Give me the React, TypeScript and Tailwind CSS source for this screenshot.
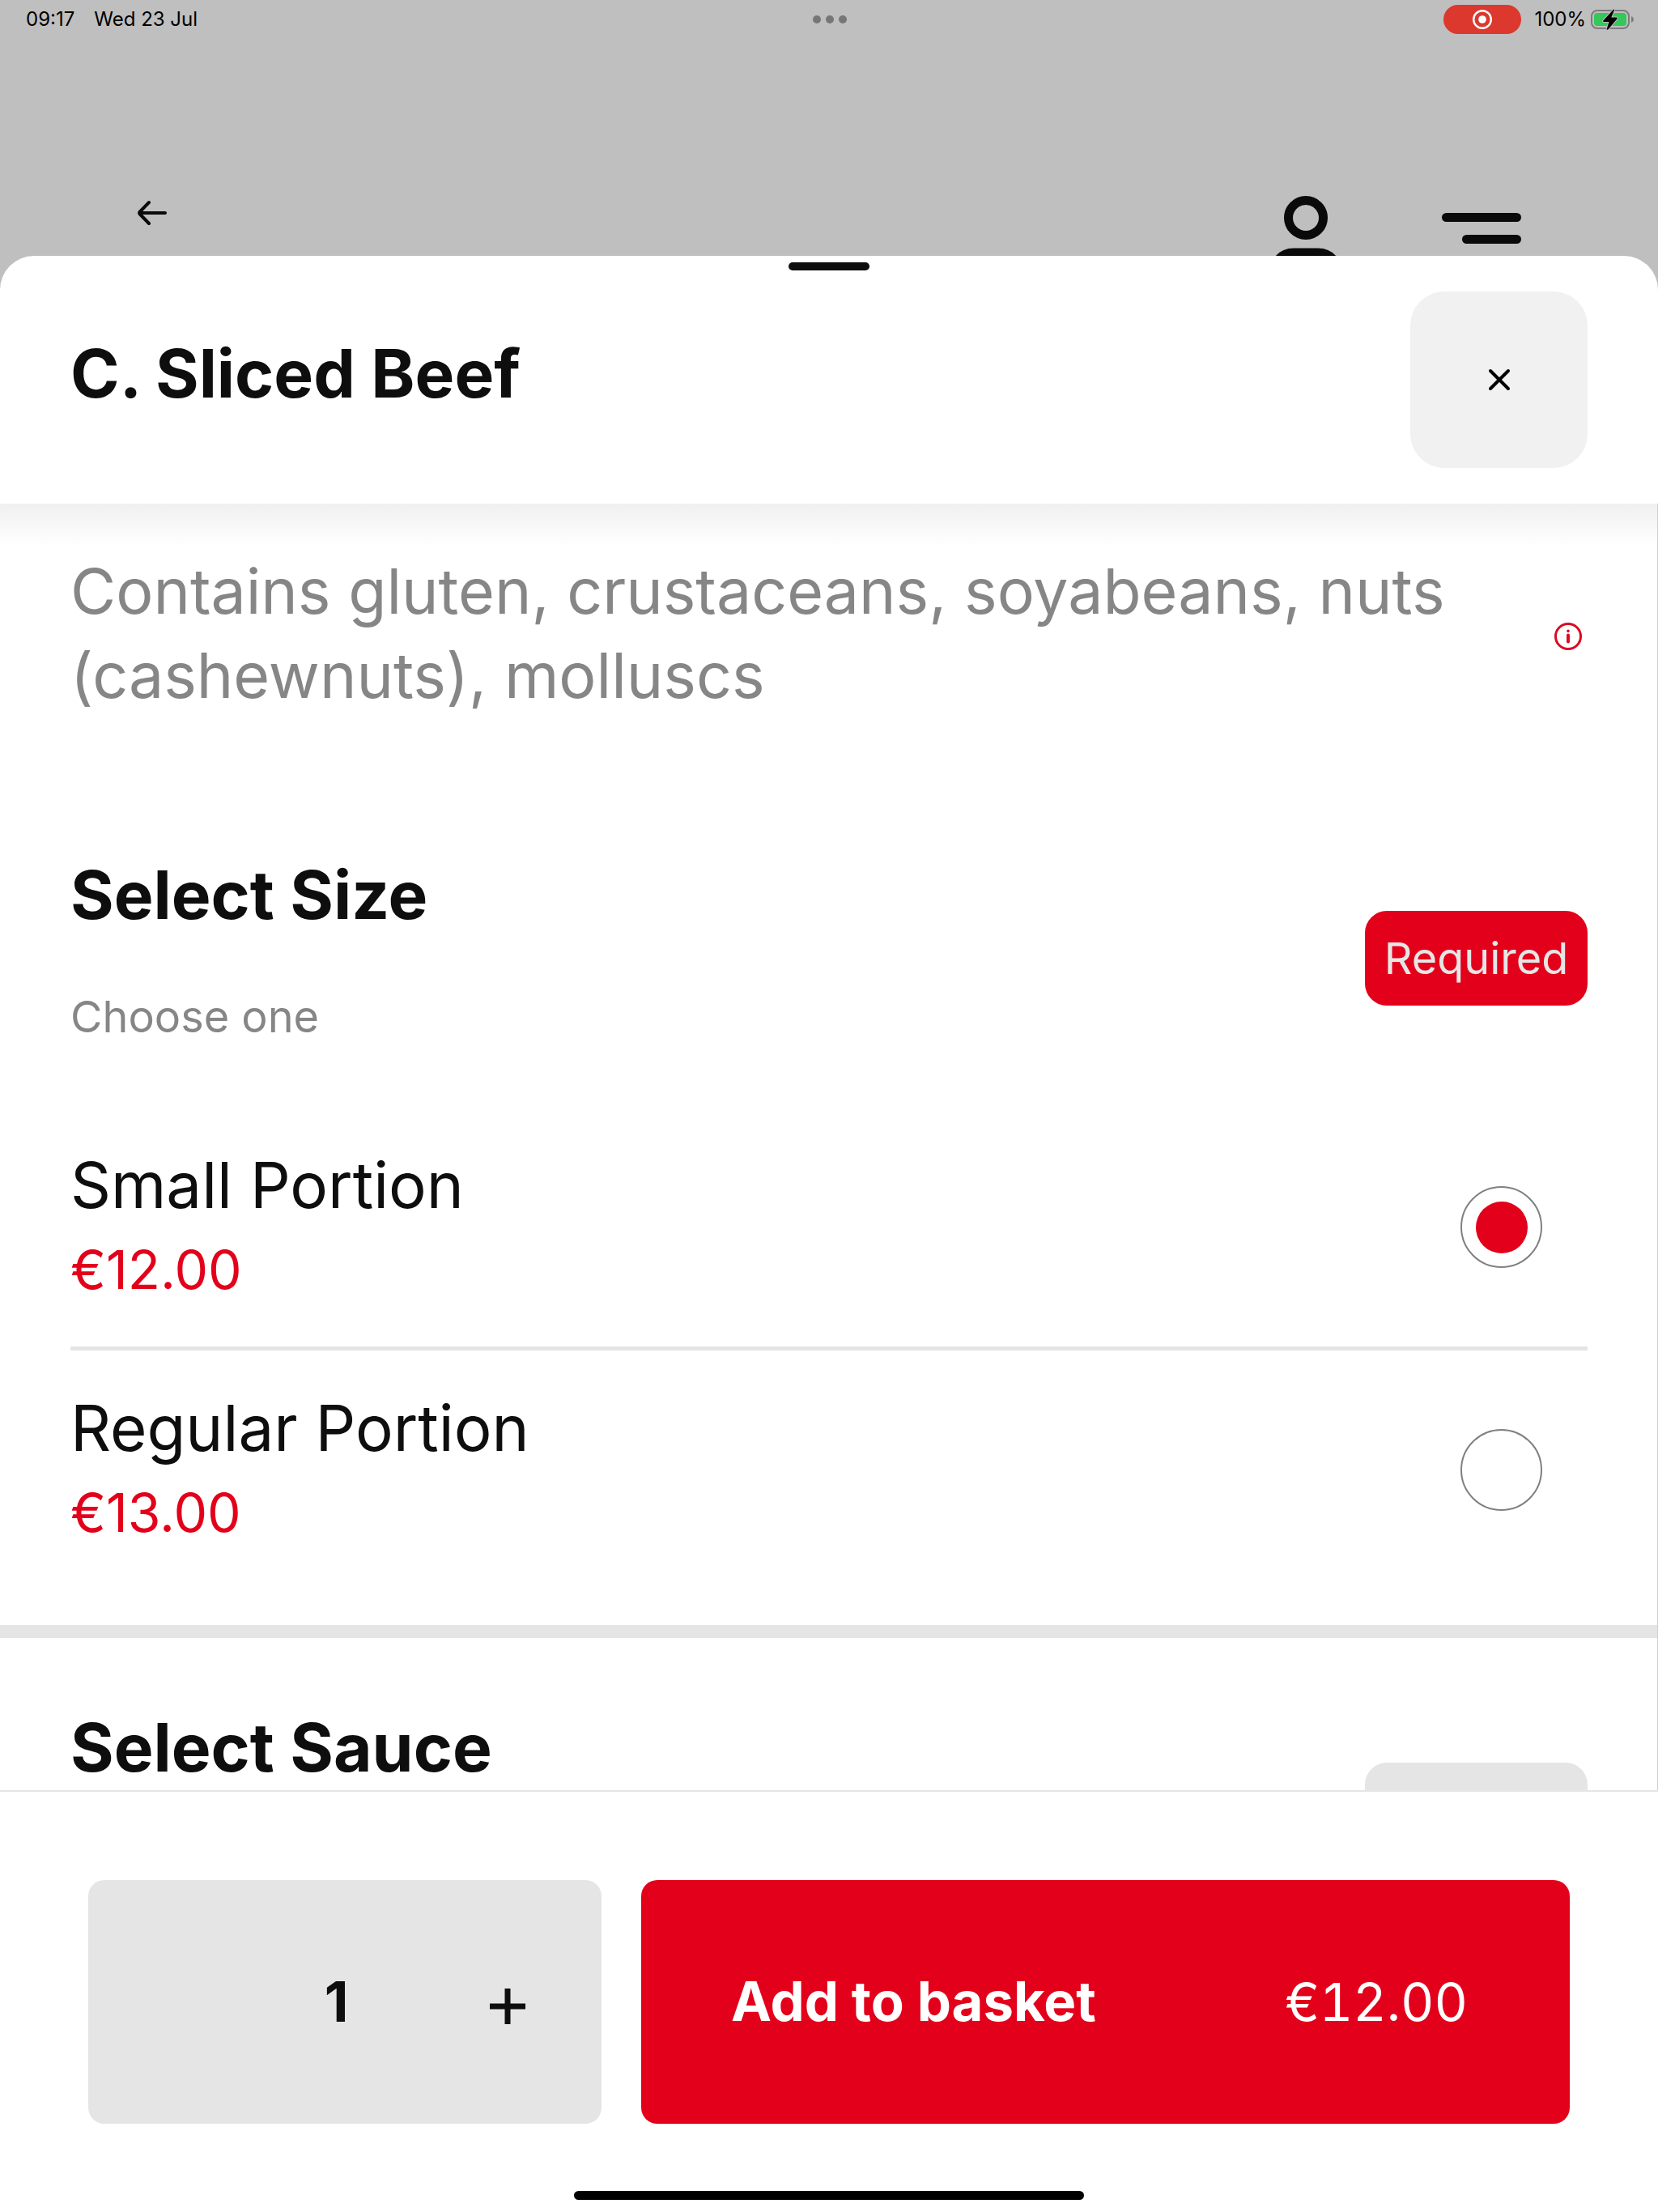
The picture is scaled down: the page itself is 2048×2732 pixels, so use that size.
import { useState } from "react"

const portions = [
    { id: "small", name: "Small Portion", price: "€12.00" },
    { id: "regular", name: "Regular Portion", price: "€13.00" },
]

function StatusBar() {
    return (
        <div className="grid grid-cols-3 items-center h-12 pl-8 pr-[29px] text-2xl text-black">
            <div className="flex gap-6">
                <span>09:17</span>
                <span>Wed 23 Jul</span>
            </div>
            <div className="flex justify-center gap-1.5">
                <span className="size-2.5 rounded-full bg-[#767676]" />
                <span className="size-2.5 rounded-full bg-[#767676]" />
                <span className="size-2.5 rounded-full bg-[#767676]" />
            </div>
            <div className="flex items-center justify-end">
                <span className="flex items-center justify-center w-24 h-9 mr-4 rounded-full bg-[#dc382d]">
                    <svg className="size-6" viewBox="0 0 24 24" fill="none">
                        <circle cx="12" cy="12" r="10.8" stroke="#fff" strokeWidth="2.4" />
                        <circle cx="12" cy="12" r="4.8" fill="#fff" />
                    </svg>
                </span>
                <span>100%</span>
                <svg className="w-[54px] h-[26px] ml-1.5" viewBox="0 0 54 26" fill="none">
                    <rect x="1" y="2" width="46" height="22" rx="7" stroke="#7c7c7c" strokeWidth="2" />
                    <rect x="4" y="5" width="40" height="16" rx="4" fill="#34c759" />
                    <path d="M50 9c2 1 3 2.300 3 4s-1 3-3 4z" fill="#7c7c7c" />
                    <path
                        d="M28 .8 15.500 14.200c-.8 1 0 1.800 1 1.800h6l-2.700 8.400c-.4 1.300.8 1.800 1.700.9L32.300 12.500c.8-1 .2-2-1-2h-6l3.700-8.900c.3-1-.5-1.200-1-.8z"
                        fill="#000"
                        stroke="#bfbfbf"
                        strokeWidth="2"
                        paintOrder="stroke"
                    />
                </svg>
            </div>
        </div>
    )
}

function PageHeader() {
    return (
        <div className="flex-1 flex justify-between items-start pl-[168px] pr-[169px]">
            <button aria-label="Back" className="mt-[198px]">
                <svg className="w-10 h-[34px]" viewBox="0 0 40 34" fill="none" stroke="#0a0a0a" strokeWidth="4" strokeLinecap="round" strokeLinejoin="round">
                    <path d="M36 17H4M16 4 4.800 15.500q-1.500 1.500 0 3L16 30" />
                </svg>
            </button>
            <div className="flex items-start gap-[123px] mt-[194px]">
                <button aria-label="Account">
                    <svg className="w-[90px] h-[74px]" viewBox="0 0 90 74" fill="none" stroke="#0a0a0a" strokeWidth="11">
                        <circle cx="45" cy="27" r="21.500" />
                        <path d="M5 100C5 82 14 70 30 70h30c16 0 25 12 25 30" />
                    </svg>
                </button>
                <button aria-label="Menu" className="flex flex-col items-end gap-4 mt-[21px]">
                    <span className="w-[98px] h-[11px] rounded-full bg-[#0a0a0a]" />
                    <span className="w-[73px] h-[11px] rounded-full bg-[#0a0a0a]" />
                </button>
            </div>
        </div>
    )
}

export default function App() {
    const [portion, setPortion] = useState("small")
    const [quantity, setQuantity] = useState(1)

    return (
        <div className="flex flex-col h-screen overflow-hidden bg-[#bfbfbf] text-[#0e0e0e] font-['Inter',sans-serif]">
            {/* Page behind the sheet */}
            <div className="flex flex-col h-[316px] shrink-0 overflow-hidden">
                <StatusBar />
                <PageHeader />
            </div>

            {/* Sheet */}
            <section className="flex-1 min-h-0 flex flex-col rounded-t-[42px] bg-white">
                <header className="shrink-0 px-[87px] pt-2">
                    <div className="w-[100px] h-2.5 mx-auto rounded-full bg-[#0e0e0e]" />
                    <div className="flex items-center justify-between pt-[26px] pb-11">
                        <h1 className="pb-3.5 text-[82px] leading-[104px] font-bold">C. Sliced Beef</h1>
                        <button aria-label="Close" className="flex items-center justify-center w-[219px] h-[218px] rounded-[42px] bg-[#f1f1f1]">
                            <svg className="size-8" viewBox="0 0 32 32" stroke="#000" strokeWidth="4" strokeLinecap="round">
                                <path d="M5 5l22 22M27 5 5 27" />
                            </svg>
                        </button>
                    </div>
                </header>

                {/* Scrolling content */}
                <div className="flex-1 min-h-0 overflow-hidden border-r border-[#d0d0d4]">
                    <div className="h-[52px] bg-linear-to-b from-[#f0f0f0] to-white" />

                    <div className="flex items-center justify-between pl-[87px] pr-[86px] pt-1 pb-[168px]">
                        <p className="max-w-[1740px] text-[77px] leading-[104px] text-[#868686]">
                            Contains gluten, crustaceans, soyabeans, nuts (cashewnuts), molluscs
                        </p>
                        <button aria-label="Allergen information" className="mt-2 mr-1.5">
                            <svg className="size-9" viewBox="0 0 36 36" fill="none" stroke="#dc0a23" strokeWidth="3" strokeLinecap="round">
                                <circle cx="18" cy="18" r="15.500" />
                                <path d="M18 16.500v8" strokeWidth="4" />
                                <path d="M18 11.300v.1" strokeWidth="3.500" />
                            </svg>
                        </button>
                    </div>

                    <fieldset aria-labelledby="size-title">
                        <div className="flex items-center justify-between pl-[87px] pr-[86px]">
                            <div className="pb-[21px]">
                                <h2 id="size-title" className="text-[82px] leading-[104px] font-bold">Select Size</h2>
                                <p className="mt-[62px] text-[54px] leading-[72px] text-[#868686]">Choose one</p>
                            </div>
                            <span className="flex items-center justify-center w-[275px] h-[117px] rounded-[27px] bg-[#e3001b] text-[54px] text-[#e6e6e6]">
                                Required
                            </span>
                        </div>
                        <div className="pl-[87px] pr-[86px] pt-[55px]">
                            {portions.map((item) => (
                                <label key={item.id} className="box-content flex items-center justify-between h-[295px] pr-14 border-t-5 border-[#e5e5e5] first:border-t-0">
                                    <span className="flex flex-col">
                                        <span className="text-[78px] leading-[104px]">{item.name}</span>
                                        <span className="text-[66px] leading-[104px] text-[#e3001b]">{item.price}</span>
                                    </span>
                                    <input
                                        type="radio"
                                        name="portion"
                                        checked={portion === item.id}
                                        onChange={() => setPortion(item.id)}
                                        className="appearance-none flex items-center justify-center size-[101px] rounded-full border-2 border-[#808080] checked:before:size-16 checked:before:rounded-full checked:before:bg-[#e3001b]"
                                    />
                                </label>
                            ))}
                        </div>
                    </fieldset>

                    <div className="h-4 mt-11 bg-[#e5e5e5]" />

                    <div className="flex items-start justify-between pl-[87px] pr-[86px] pt-[84px]">
                        <h2 className="text-[82px] leading-[104px] font-bold">Select Sauce</h2>
                        <span className="w-[275px] h-[117px] mt-[70px] rounded-[27px] bg-[#e5e5e5]" />
                    </div>
                </div>

                <footer className="shrink-0 border-t-2 border-[#e5e5e5]">
                    <div className="flex gap-[49px] px-[109px] pt-[109px] pb-[83px]">
                        <div className="grid grid-cols-[1fr_211px_211px] items-center w-[634px] h-[301px] pr-[11px] rounded-[20px] bg-[#e5e5e5]">
                            <span />
                            <span className="text-center text-[69px] font-bold">{quantity}</span>
                            <button aria-label="Add one" onClick={() => setQuantity(quantity + 1)} className="flex items-center justify-center pt-2.5">
                                <svg className="size-11" viewBox="0 0 44 44" stroke="#0e0e0e" strokeWidth="7">
                                    <path d="M0 22h44M22 0v44" />
                                </svg>
                            </button>
                        </div>
                        <button className="flex-1 flex items-center justify-between pl-[111px] pr-[126px] rounded-[20px] bg-[#e3001b] text-white">
                            <span className="text-[67px] font-bold">Add to basket</span>
                            <span className="text-[64px] tabular-nums">€12.00</span>
                        </button>
                    </div>
                    <div className="w-[630px] h-[11px] mx-auto mb-[15px] rounded-full bg-black" />
                </footer>
            </section>
        </div>
    )
}
